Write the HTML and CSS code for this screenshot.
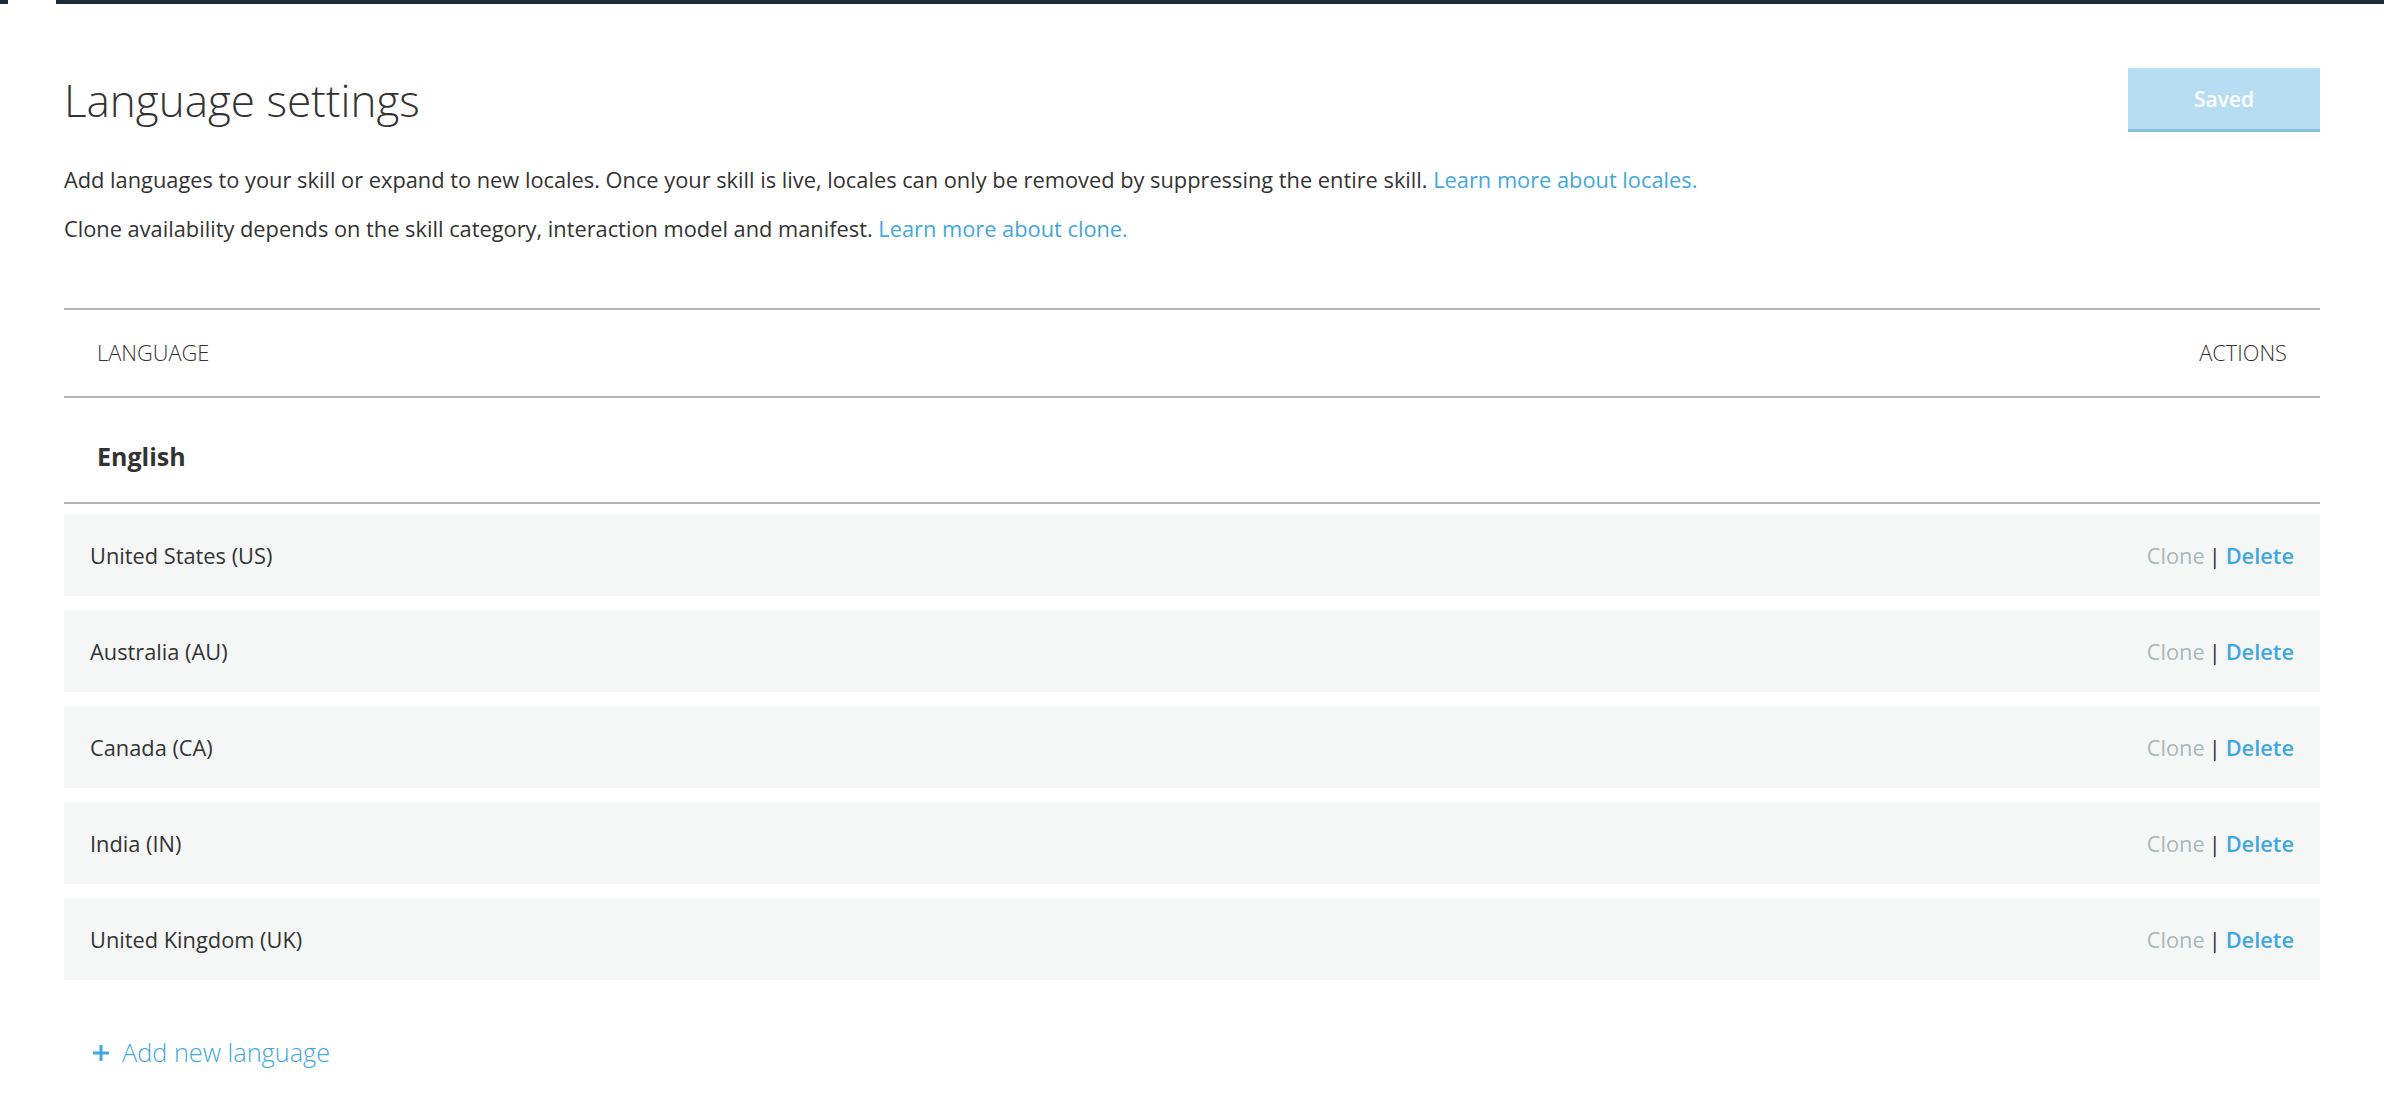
FILE: index.html
```html
<!DOCTYPE html>
<html lang="en">
<head>
<meta charset="UTF-8">
<meta name="viewport" content="width=device-width, initial-scale=1.0">
<title>Language settings</title>
<link rel="stylesheet" href="styles.css">
</head>
<body>
    <div class="topbar">
        <span class="topbar-stub"></span>
        <span class="topbar-line"></span>
    </div>

    <main class="page">
        <div class="page-head">
            <h1>Language settings</h1>
            <button class="btn-saved" disabled>Saved</button>
        </div>

        <p class="intro">Add languages to your skill or expand to new locales. Once your skill is live, locales can only be removed by suppressing the entire skill. <a href="#">Learn more about locales.</a></p>
        <p class="intro">Clone availability depends on the skill category, interaction model and manifest. <a href="#">Learn more about clone.</a></p>

        <section class="locales">
            <div class="locales-head">
                <span>LANGUAGE</span>
                <span>ACTIONS</span>
            </div>
            <div class="lang-group">English</div>
            <ul class="locale-list">
                <li class="locale-row">
                    <span>United States (US)</span>
                    <span class="actions"><span class="clone">Clone</span><span class="sep">|</span><a href="#" class="delete">Delete</a></span>
                </li>
                <li class="locale-row">
                    <span>Australia (AU)</span>
                    <span class="actions"><span class="clone">Clone</span><span class="sep">|</span><a href="#" class="delete">Delete</a></span>
                </li>
                <li class="locale-row">
                    <span>Canada (CA)</span>
                    <span class="actions"><span class="clone">Clone</span><span class="sep">|</span><a href="#" class="delete">Delete</a></span>
                </li>
                <li class="locale-row">
                    <span>India (IN)</span>
                    <span class="actions"><span class="clone">Clone</span><span class="sep">|</span><a href="#" class="delete">Delete</a></span>
                </li>
                <li class="locale-row">
                    <span>United Kingdom (UK)</span>
                    <span class="actions"><span class="clone">Clone</span><span class="sep">|</span><a href="#" class="delete">Delete</a></span>
                </li>
            </ul>
        </section>

        <a href="#" class="add-lang">
            <svg class="plus" width="18" height="18" viewBox="0 0 18 18"><path d="M9 1v16M1 9h16" stroke="currentColor" stroke-width="3" fill="none"/></svg>
            Add new language
        </a>
    </main>
</body>
</html>
```

FILE: styles.css
```css
body {
    margin: 0;
    padding: 0;
    background-color: #fff;
    font-family: "Open Sans", Arial, sans-serif;
    font-size: 21.8px;
    color: #333;
}
a {
    color: #3fa8de;
    text-decoration: none;
}

/* Top strip */
.topbar {
    display: flex;
    height: 4px;
}
.topbar-stub {
    width: 8px;
    background-color: #1c2a3a;
}
.topbar-line {
    flex: 1;
    margin-left: 48px;
    background-color: #1c2a3a;
}

.page {
    padding: 64px 64px 40px;
}
.page-head {
    display: flex;
    justify-content: space-between;
    align-items: center;
    height: 64px;
}
.page-head h1 {
    margin: 0;
    font-size: 44px;
    font-weight: 300;
    line-height: 64px;
    color: #333;
}
.btn-saved {
    width: 192px;
    height: 64px;
    border: none;
    border-bottom: 3px solid #86c1de;
    background-color: #b7ddf2;
    color: #fff;
    font-family: inherit;
    font-size: 21px;
    font-weight: 600;
}

.intro {
    margin: 0 0 19px;
    line-height: 30px;
}
.page-head + .intro {
    margin-top: 33px;
}

/* Locale table */
.locales {
    margin-top: 64px;
}
.locales-head {
    display: flex;
    justify-content: space-between;
    padding: 0 33px;
    line-height: 86px;
    font-weight: 300;
    border-top: 2px solid #b4b4ba;
    border-bottom: 2px solid #b4b4ba;
}
.lang-group {
    padding: 12px 33px 0;
    line-height: 92px;
    font-size: 25px;
    font-weight: 700;
    border-bottom: 2px solid #b4b4ba;
}
.locale-list {
    list-style: none;
    margin: 10px 0 0;
    padding: 0;
    display: flex;
    flex-direction: column;
    gap: 14px;
}
.locale-row {
    display: flex;
    justify-content: space-between;
    align-items: center;
    height: 82px;
    padding: 0 26px;
    background-color: #f5f7f7;
}
.actions {
    display: flex;
    align-items: center;
}
.clone {
    color: #aab7b8;
}
.sep {
    margin: 0 5px 0 4px;
    color: #333;
}
.delete {
    font-weight: 600;
}

.add-lang {
    display: inline-flex;
    align-items: center;
    gap: 12px;
    margin: 52px 0 0 28px;
    font-size: 25.3px;
    font-weight: 300;
    line-height: 40px;
}
.plus {
    margin-top: 2px;
}
```
